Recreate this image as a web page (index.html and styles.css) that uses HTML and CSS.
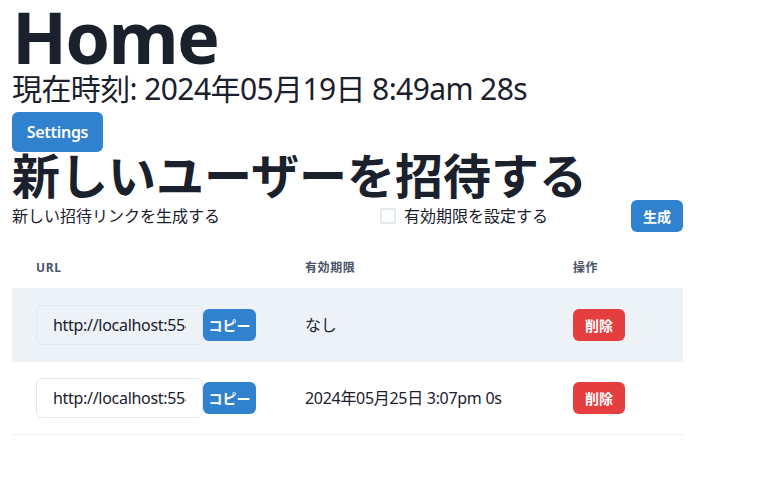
FILE: index.html
```html
<!DOCTYPE html>
<html lang="ja">
<head>
<meta charset="utf-8">
<title>Home</title>
<link rel="stylesheet" href="styles.css">
</head>
<body>
<main class="page">
  <h1 class="title">Home</h1>
  <p class="clock">現在時刻: 2024年05月19日 8:49am 28s</p>
  <button class="btn btn-blue btn-md">Settings</button>
  <h2 class="invite-title">新しいユーザーを招待する</h2>
  <div class="form-row">
    <span class="form-label">新しい招待リンクを生成する</span>
    <label class="check">
      <span class="check-box"></span>
      <span class="check-label">有効期限を設定する</span>
    </label>
    <button class="btn btn-blue btn-sm">生成</button>
  </div>
  <table class="invites">
    <colgroup>
      <col class="c-url">
      <col class="c-exp">
      <col class="c-act">
    </colgroup>
    <thead>
      <tr><th>URL</th><th>有効期限</th><th>操作</th></tr>
    </thead>
    <tbody>
      <tr class="striped">
        <td><div class="url-cell"><input class="url-input" readonly value="http://localhost:5543/invite/8f3a2c1d"><button class="btn btn-blue btn-copy">コピー</button></div></td>
        <td>なし</td>
        <td><button class="btn btn-red btn-sm">削除</button></td>
      </tr>
      <tr>
        <td><div class="url-cell"><input class="url-input" readonly value="http://localhost:5543/invite/b71e09aa"><button class="btn btn-blue btn-copy">コピー</button></div></td>
        <td>2024年05月25日 3:07pm 0s</td>
        <td><button class="btn btn-red btn-sm">削除</button></td>
      </tr>
    </tbody>
  </table>
</main>
</body>
</html>
```
FILE: styles.css
```css
* { box-sizing: border-box; }
html, body { margin: 0; padding: 0; background: #fff; }
body {
  font-family: "Noto Sans", "Noto Sans CJK JP", sans-serif;
  color: #1A202C;
  font-size: 16px;
  line-height: 1.5;
}
.page { padding: 0 12px; }
.title {
  margin: 0;
  font-size: 72px;
  line-height: 72px;
  font-weight: 700;
  letter-spacing: -1.8px;
}
.clock {
  margin: 0 0 6px;
  font-size: 30px;
  line-height: 34px;
  letter-spacing: -0.6px;
}
.btn {
  border: none;
  color: #fff;
  font-family: inherit;
  font-weight: 600;
  border-radius: 6px;
  padding: 0;
  display: inline-flex;
  align-items: center;
  justify-content: center;
  cursor: pointer;
}
.btn-blue { background: #3182CE; }
.btn-red { background: #E53E3E; }
.btn-md { height: 40px; width: 91px; font-size: 16px; letter-spacing: -0.3px; }
.btn-sm { height: 32px; width: 52px; font-size: 14px; }
.btn-copy { height: 32px; width: 53px; font-size: 14px; flex: none; }
.invite-title {
  margin: 0;
  font-size: 48px;
  line-height: 48px;
  font-weight: 700;
}
.form-row {
  display: flex;
  align-items: center;
  width: 671px;
  height: 32px;
}
.form-label { flex: 1; font-size: 16px; }
.check { display: flex; align-items: center; margin-right: 83px; }
.check-box {
  width: 16px; height: 16px;
  border: 2px solid #E2E8F0;
  border-radius: 2px;
  margin-left: 1px;
  margin-right: 8px;
}
.check-label { font-size: 16px; }
.invites {
  margin-top: 16px;
  width: 671px;
  border-collapse: collapse;
  table-layout: fixed;
}
.c-url { width: 269px; }
.c-exp { width: 268px; }
.c-act { width: 134px; }
.invites th {
  text-align: left;
  font-size: 12px;
  line-height: 16px;
  font-weight: 700;
  text-transform: uppercase;
  letter-spacing: 0.05em;
  color: #4A5568;
  padding: 12px 24px;
  border-bottom: 1px solid #EDF2F7;
}
.invites td {
  padding: 16px 24px;
  border-bottom: 1px solid #EDF2F7;
  font-size: 16px;
  line-height: 24px;
  height: 73px;
  vertical-align: middle;
  letter-spacing: -0.3px;
}
.invites tr.striped td { background: #EDF2F7; }
.url-cell { display: flex; align-items: center; }
.url-input {
  width: 167px;
  height: 40px;
  flex: none;
  border: 1px solid #E2E8F0;
  border-radius: 6px;
  padding: 0 16px;
  font-family: inherit;
  font-size: 16px;
  letter-spacing: -0.3px;
  color: #1A202C;
  background: transparent;
  outline: none;
}
.invites tbody tr:not(.striped) .url-input { background: #fff; }
```
